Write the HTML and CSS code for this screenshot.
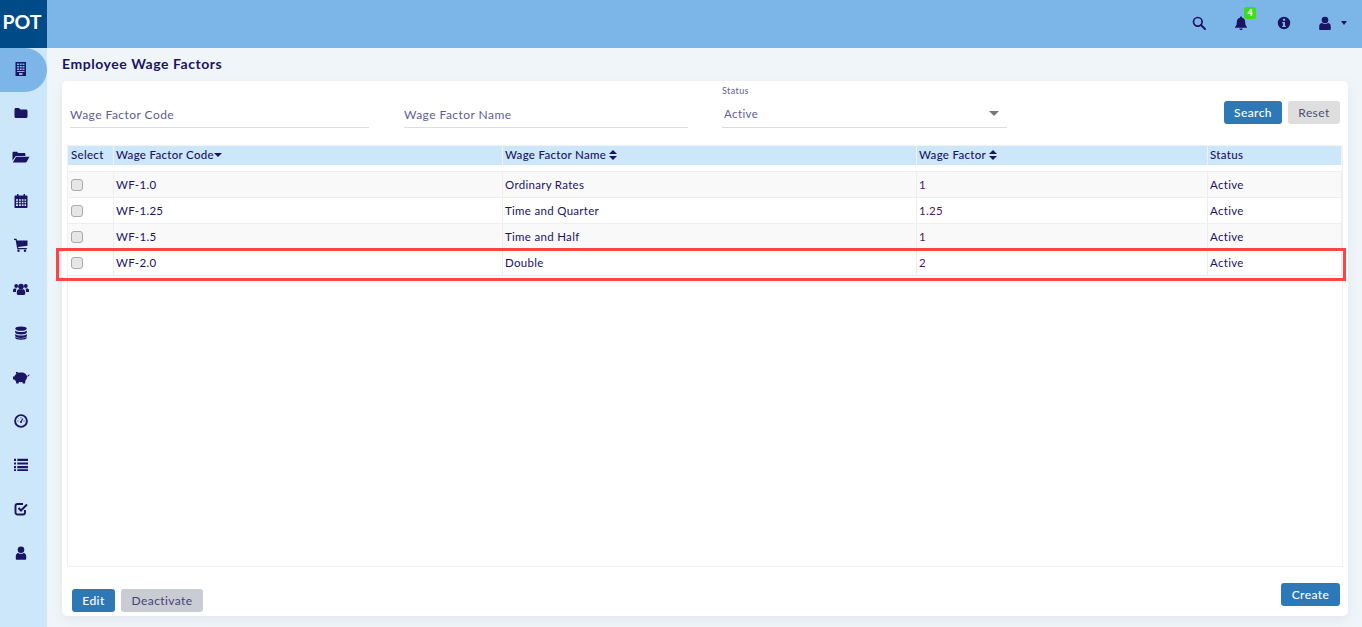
FILE: index.html
```html
<!DOCTYPE html>
<html lang="en">
<head>
<meta charset="utf-8">
<title>Employee Wage Factors</title>
<link rel="stylesheet" href="styles.css">
</head>
<body>
<header class="topbar">
  <div class="logo">POT</div>
  <div class="top-icons">
    <svg class="ti ti-search" viewBox="0 0 14 14"><circle cx="5.8" cy="5.8" r="4.3" fill="none" stroke="currentColor" stroke-width="1.7"/><path d="M9 9l4 4" stroke="currentColor" stroke-width="2" stroke-linecap="round"/></svg>
    <span class="bell"><svg class="ti" viewBox="0 0 14 14"><path d="M7 0.5c.6 0 1 .4 1 1v.3c2 .4 3.2 2 3.2 4.2 0 3 .8 4 1.8 5v.8H1v-.8c1-1 1.800-2 1.800-5 0-2.200 1.200-3.800 3.200-4.200v-.3c0-.6.400-1 1-1zM5.400 12.500h3.200c0 1-.7 1.500-1.600 1.500s-1.600-.5-1.600-1.500z" fill="currentColor"/></svg><span class="badge">4</span></span>
    <svg class="ti ti-info" viewBox="0 0 14 14"><path fill-rule="evenodd" d="M7 .8a6.200 6.200 0 1 1 0 12.400A6.200 6.200 0 0 1 7 .8zM5.900 2.800v2h2.200v-2zM5.200 6v1.200h.8v2.500h-.8v1.300h3.600V9.700H8V6z" fill="currentColor"/></svg>
    <span class="user"><svg class="ti" viewBox="0 0 14 14"><circle cx="7" cy="4" r="3.300" fill="currentColor"/><path d="M1.200 13v-2.500c0-2 1.300-3.400 2.800-3.500.8.700 1.800 1 3 1s2.200-.3 3-1c1.500.1 2.800 1.500 2.800 3.500V13c0 .6-.5 1-1 1H2.200c-.5 0-1-.4-1-1z" fill="currentColor"/></svg><i class="caret"></i></span>
  </div>
</header>
<div class="shell">
  <nav class="sidebar">
    <a class="nav active"><svg viewBox="0 0 14 14"><path fill-rule="evenodd" d="M1.500 0h10.500v14H1.500zM3 1.500v1.500h2V1.500zM5.800 1.500v1.500h2V1.500zM8.500 1.500v1.500h2V1.500zM3 4v1.500h2V4zM5.800 4v1.500h2V4zM8.500 4v1.500h2V4zM3 6.500V8h2V6.500zM5.800 6.500V8h2V6.500zM8.500 6.500V8h2V6.500zM3 9v1h7.500V9zM5 11v2h3.500v-2z" fill="currentColor"/></svg></a>
    <a class="nav"><svg viewBox="0 0 14 14"><path d="M0.500 3.500c0-.8.600-1.500 1.500-1.500h3l1.300 1.500H12c.8 0 1.500.6 1.500 1.500v5.500c0 .8-.7 1.500-1.500 1.500H2c-.9 0-1.500-.7-1.500-1.500z" fill="currentColor"/></svg></a>
    <a class="nav"><svg viewBox="0 0 18 14"><path d="M.5 10.500V3c0-.7.500-1.200 1.200-1.200h3.300l1.200 1.300h6c.6 0 1.200.5 1.200 1.200V6H4.500c-.7 0-1.200.3-1.500 1zM.8 12.500 3.800 7.200c.2-.3.500-.5.800-.5H17.500L14.600 12c-.2.300-.6.500-1 .5z" fill="currentColor"/></svg></a>
    <a class="nav"><svg viewBox="0 0 14 14"><path fill-rule="evenodd" d="M3 0h1.500v1.500h5V0H11v1.500h1.500c.6 0 1 .4 1 1V13c0 .6-.4 1-1 1h-11c-.6 0-1-.4-1-1V2.500c0-.6.400-1 1-1H3zM2 5.200v1.500h2V5.200zM5 5.200v1.500h1.800V5.200zM7.800 5.200v1.500h1.700V5.200zM10.500 5.200v1.500H12V5.200zM2 7.700v1.500h2V7.700zM5 7.700v1.500h1.800V7.700zM7.800 7.700v1.500h1.700V7.700zM10.500 7.700v1.500H12V7.700zM2 10.200v1.800h2v-1.800zM5 10.200v1.800h1.800v-1.800zM7.800 10.200v1.800h1.700v-1.800zM10.500 10.200v1.800H12v-1.800z" fill="currentColor"/></svg></a>
    <a class="nav"><svg viewBox="0 0 14 14"><path d="M0 .8h2.600l.4 1.600h10.500v5.400l-9.400 1.100.2 1h8.600v1.300H3.300L1.600 2.100H0z" fill="currentColor"/><circle cx="4.500" cy="12.700" r="1.200" fill="currentColor"/><circle cx="11" cy="12.700" r="1.200" fill="currentColor"/></svg></a>
    <a class="nav nav-wide"><svg viewBox="0 0 16 14"><circle cx="3.200" cy="4" r="1.900" fill="currentColor"/><circle cx="12.800" cy="4" r="1.900" fill="currentColor"/><circle cx="8" cy="4.600" r="2.800" fill="currentColor"/><path d="M0 10V8.200C0 7 .9 6.400 2 6.400h1.600c-.4.900-.7 2-.7 3.600zM16 10V8.200c0-1.200-.9-1.800-2-1.800h-1.600c.4.900.7 2 .7 3.600zM3.800 11.800V10c0-1.700 1-2.800 2-2.800h4.400c1 0 2 1.100 2 2.800v1.800c0 .7-.5 1.200-1.200 1.200H5c-.7 0-1.200-.5-1.200-1.200z" fill="currentColor"/></svg></a>
    <a class="nav"><svg viewBox="0 0 14 14"><ellipse cx="7" cy="2.600" rx="5.800" ry="2.200" fill="currentColor"/><path d="M1.200 4.500c1 1 3.300 1.500 5.800 1.500s4.800-.5 5.800-1.500v2c0 1.200-2.600 2-5.800 2s-5.800-.8-5.800-2zM1.200 8c1 1 3.300 1.500 5.800 1.500S11.800 9 12.800 8v2c0 1.200-2.600 2-5.800 2s-5.800-.8-5.800-2z" fill="currentColor"/><path d="M1.200 11c1 1 3.300 1.300 5.800 1.300s4.800-.3 5.800-1.300v.8c0 1.200-2.600 2-5.800 2s-5.800-.8-5.800-2z" fill="currentColor"/></svg></a>
    <a class="nav nav-wide"><svg viewBox="0 0 18 14"><path d="M1 6.500h1.300c.4-1 1.100-1.900 2-2.500L3.800 1.800c1 0 2 .4 2.700 1 .9-.3 1.800-.4 2.800-.4 3.200 0 5.700 1.800 5.700 4.600 0 1.300-.6 2.500-1.500 3.300l-.5 3.200h-2.300l-.3-1.400c-1.200.2-2.300.2-3.500 0L6.600 13.500H4.300l-.5-2.600C3.200 10.500 2.700 10 2.300 9.400H1zM14.800 5.700c1.100.1 1.800-.5 2-1.500l.7.200c-.2 1.400-1.200 2.200-2.600 2.100z" fill="currentColor"/></svg></a>
    <a class="nav"><svg viewBox="0 0 14 14"><circle cx="7" cy="7" r="5.900" fill="none" stroke="currentColor" stroke-width="1.900"/><path d="M7 7.800 8.800 4.500" stroke="currentColor" stroke-width="1.200"/><circle cx="7" cy="8" r="1.100" fill="currentColor"/><path d="M3.400 7h1.100M9.500 7h1.100M7 3.300v1M4.500 4.600l.6.600" stroke="currentColor" stroke-width=".9"/></svg></a>
    <a class="nav"><svg viewBox="0 0 14 14"><path d="M0 1.500h2v2.200H0zM3.300 1.500H14v2.200H3.300zM0 5.100h2v2.200H0zM3.300 5.100H14v2.200H3.300zM0 8.700h2v2.200H0zM3.300 8.700H14v2.200H3.300zM0 12h2v1.800H0zM3.300 12H14v1.800H3.300z" fill="currentColor" transform="translate(0 -.7)"/></svg></a>
    <a class="nav"><svg viewBox="0 0 14 14"><path d="M11 8v2.500c0 1.100-.9 2-2 2H3.500c-1.100 0-2-.9-2-2V4c0-1.100.9-2 2-2H9" fill="none" stroke="currentColor" stroke-width="1.900"/><path d="M4.500 6l2.500 2.500L13 2.500" fill="none" stroke="currentColor" stroke-width="2"/></svg></a>
    <a class="nav"><svg viewBox="0 0 14 14"><circle cx="7" cy="3.800" r="3.300" fill="currentColor"/><path d="M1.800 12.800v-2.500c0-2 1.200-3.300 2.500-3.400.8.600 1.700.9 2.700.9s1.900-.3 2.700-.9c1.300.1 2.500 1.400 2.500 3.400v2.500c0 .6-.5 1-1 1H2.800c-.5 0-1-.4-1-1z" fill="currentColor"/></svg></a>
  </nav>
  <main class="content">
    <h1 class="page-title">Employee Wage Factors</h1>
    <section class="card">
      <form class="filters">
        <div class="field field-code"><span class="ph">Wage Factor Code</span></div>
        <div class="field field-name"><span class="ph">Wage Factor Name</span></div>
        <div class="field field-status">
          <label class="mini">Status</label>
          <div class="select"><span>Active</span><i class="sel-caret"></i></div>
        </div>
        <div class="filter-btns">
          <button type="button" class="btn primary">Search</button>
          <button type="button" class="btn light">Reset</button>
        </div>
      </form>
      <div class="table-wrap">
        <table class="grid">
          <colgroup>
            <col class="c1"><col class="c2"><col class="c3"><col class="c4"><col class="c5">
          </colgroup>
          <thead>
            <tr>
              <th>Select</th>
              <th>Wage Factor Code<i class="sort-down"></i></th>
              <th>Wage Factor Name <i class="sort"></i></th>
              <th>Wage Factor <i class="sort"></i></th>
              <th>Status</th>
            </tr>
          </thead>
          <tbody>
            <tr class="spacer"><td colspan="5"></td></tr>
            <tr class="odd"><td><i class="check"></i></td><td>WF-1.0</td><td>Ordinary Rates</td><td class="num">1</td><td>Active</td></tr>
            <tr><td><i class="check"></i></td><td>WF-1.25</td><td>Time and Quarter</td><td class="num">1.25</td><td>Active</td></tr>
            <tr class="odd"><td><i class="check"></i></td><td>WF-1.5</td><td>Time and Half</td><td class="num">1</td><td>Active</td></tr>
            <tr><td><i class="check"></i></td><td>WF-2.0</td><td>Double</td><td class="num">2</td><td>Active</td></tr>
          </tbody>
        </table>
        <div class="highlight"></div>
      </div>
      <div class="actions">
        <div class="actions-left">
          <button type="button" class="btn primary">Edit</button>
          <button type="button" class="btn muted">Deactivate</button>
        </div>
        <button type="button" class="btn primary create">Create</button>
      </div>
    </section>
  </main>
</div>
</body>
</html>
```
FILE: styles.css
```css
* { box-sizing: border-box; }
html, body { margin: 0; height: 100%; overflow: hidden; }
body {
  font-family: Lato, "Liberation Sans", sans-serif;
  font-size: 12px;
  color: #1b1464;
  letter-spacing: .4px;
  background: #f0f5f9;
}
.topbar { height: 48px; background: #7cb6e8; display: flex; justify-content: space-between; }
.logo {
  width: 47px; background: #004b87; color: #fff;
  font-size: 19.5px; font-weight: 700; letter-spacing: 0;
  display: flex; align-items: center; justify-content: center;
  padding-bottom: 5px; padding-right: 3px;
}
.top-icons { display: flex; align-items: center; color: #1b1464; padding-right: 15px; padding-bottom: 3px; }
.ti { width: 14px; height: 14px; display: block; }
.ti-search { margin-right: 28px; margin-top: 1px; }
.bell { position: relative; margin-right: 29px; }
.badge {
  position: absolute; left: 10px; top: -9px; width: 12px; height: 12px;
  background: #3fdc1e; border-radius: 2px; color: #fff;
  font-size: 9px; font-weight: 700; line-height: 11px; text-align: center; letter-spacing: 0;
}
.ti-info { margin-right: 27px; }
.user { display: flex; align-items: center; gap: 9px; }
.caret { width: 0; height: 0; border: 3.5px solid transparent; border-top: 4px solid #1b1464; border-bottom: 0; }
.shell { display: flex; height: 579px; }
.sidebar { width: 47px; background: #cce6fa; flex: none; color: #1b1464; display: flex; flex-direction: column; }
.nav { height: 44px; flex: none; display: flex; align-items: center; justify-content: center; padding-right: 5px; padding-bottom: 3px; }
.nav svg { width: 14px; height: 14px; display: block; }
.nav:nth-child(3) svg { width: 18px; }
.nav-wide svg { width: 16px; }
.nav:nth-child(8) svg { width: 18px; }
.nav.active { background: #7cb6e8; border-radius: 0 22px 22px 0; padding-bottom: 2px; }
.content { flex: 1; padding: 0 14px 11px 15px; display: flex; flex-direction: column; min-width: 0; }
.page-title { margin: 0; height: 33px; line-height: 32px; font-size: 14px; font-weight: 700; letter-spacing: .55px; }
.card {
  flex: 1; background: #fff; border-radius: 5px; padding: 0 5px;
  display: flex; flex-direction: column; min-height: 0;
  box-shadow: 0 4px 12px rgba(120,140,160,.12);
}
.filters { height: 64px; display: flex; align-items: flex-end; flex: none; padding-left: 3px; padding-bottom: 17px; }
.field { border-bottom: 1px solid #ddd; height: 25px; }
.ph { color: #5f5d95; font-size: 12px; line-height: 23px; display: block; letter-spacing: .45px; }
.field-code { width: 299px; margin-right: 35px; }
.field-name { width: 284px; margin-right: 34px; }
.field-status { width: 285px; position: relative; margin-right: 217px; }
.mini { position: absolute; left: 0; top: -18px; font-size: 9px; color: #5f5d95; }
.select { display: flex; justify-content: space-between; align-items: center; height: 24px; padding: 0 8px 3px 2px; color: #5f5d95; font-size: 11.5px; }
.sel-caret { width: 0; height: 0; border: 5px solid transparent; border-top: 5px solid #777; border-bottom: 0; margin-bottom: 1px; }
.filter-btns { display: flex; gap: 6px; align-self: flex-start; margin-top: 20px; }
.btn {
  font: inherit; letter-spacing: .4px; height: 23px; border: 0; border-radius: 3px; padding: 0; cursor: pointer;
  display: inline-block;
}
.primary { background: #2d79b7; color: #fff; font-weight: 500; }
.light { background: #dedede; color: #504e72; }
.muted { background: #c9ccd2; color: #45417c; }
.filter-btns .primary { width: 58px; }
.filter-btns .light { width: 52px; }
.table-wrap { height: 422px; flex: none; border: 1px solid #eff1f3; position: relative; border-top: 0; }
.grid { width: 100%; border-collapse: separate; border-spacing: 0; table-layout: fixed; }
.c1 { width: 46px; } .c2 { width: 389px; } .c3 { width: 414px; } .c4 { width: 291px; } .c5 { width: auto; }
.grid th {
  background: #cce6fa; height: 20px; line-height: 16px; text-align: left; font-weight: 500; padding: 0 0 1px 2px;
  border: 1px solid #f0f2f4; border-width: 1px 1px 0 0; white-space: nowrap; font-size: 11.5px; color: #1b1464;
  letter-spacing: .3px;
}
.grid th:first-child { padding-left: 3px; }
.grid td { height: 26px; padding: 0 0 0 2px; border-right: 1px solid #eee; border-bottom: 1px solid #eee; font-size: 11.5px; letter-spacing: .3px; }
.grid td:first-child { padding-left: 3px; }
.grid .spacer td { height: 7px; padding: 0; background: #fff; border-bottom: 1px solid #eee; border-right: 0; }
.odd td { background: #f9f9f9; }
.grid .num { color: #551466; }
.check {
  display: block; width: 12px; height: 12px; border: 1px solid #aaa; border-radius: 3px; background: #e6e6e6;
}
.sort-down { display: inline-block; vertical-align: 2px; width: 0; height: 0; border: 4px solid transparent; border-top: 4px solid #1b1464; border-bottom: 0; }
.sort { display: inline-block; position: relative; width: 8px; height: 10px; vertical-align: -1px; }
.sort::before, .sort::after { content: ""; position: absolute; left: 0; border: 4px solid transparent; }
.sort::before { top: 0; border-bottom: 4px solid #1b1464; border-top: 0; }
.sort::after { bottom: 0; border-top: 4px solid #1b1464; border-bottom: 0; }
.highlight { position: absolute; left: -12px; top: 103px; width: 1290px; height: 33px; border: 3px solid #ff4444; pointer-events: none; }
.actions { flex: 1; display: flex; justify-content: space-between; padding: 16px 3px 0 5px; align-items: flex-start; }
.actions-left { display: flex; gap: 6px; margin-top: 6px; }
.actions-left .primary { width: 43px; }
.actions-left .muted { width: 82px; }
.create { width: 59px; }
```
